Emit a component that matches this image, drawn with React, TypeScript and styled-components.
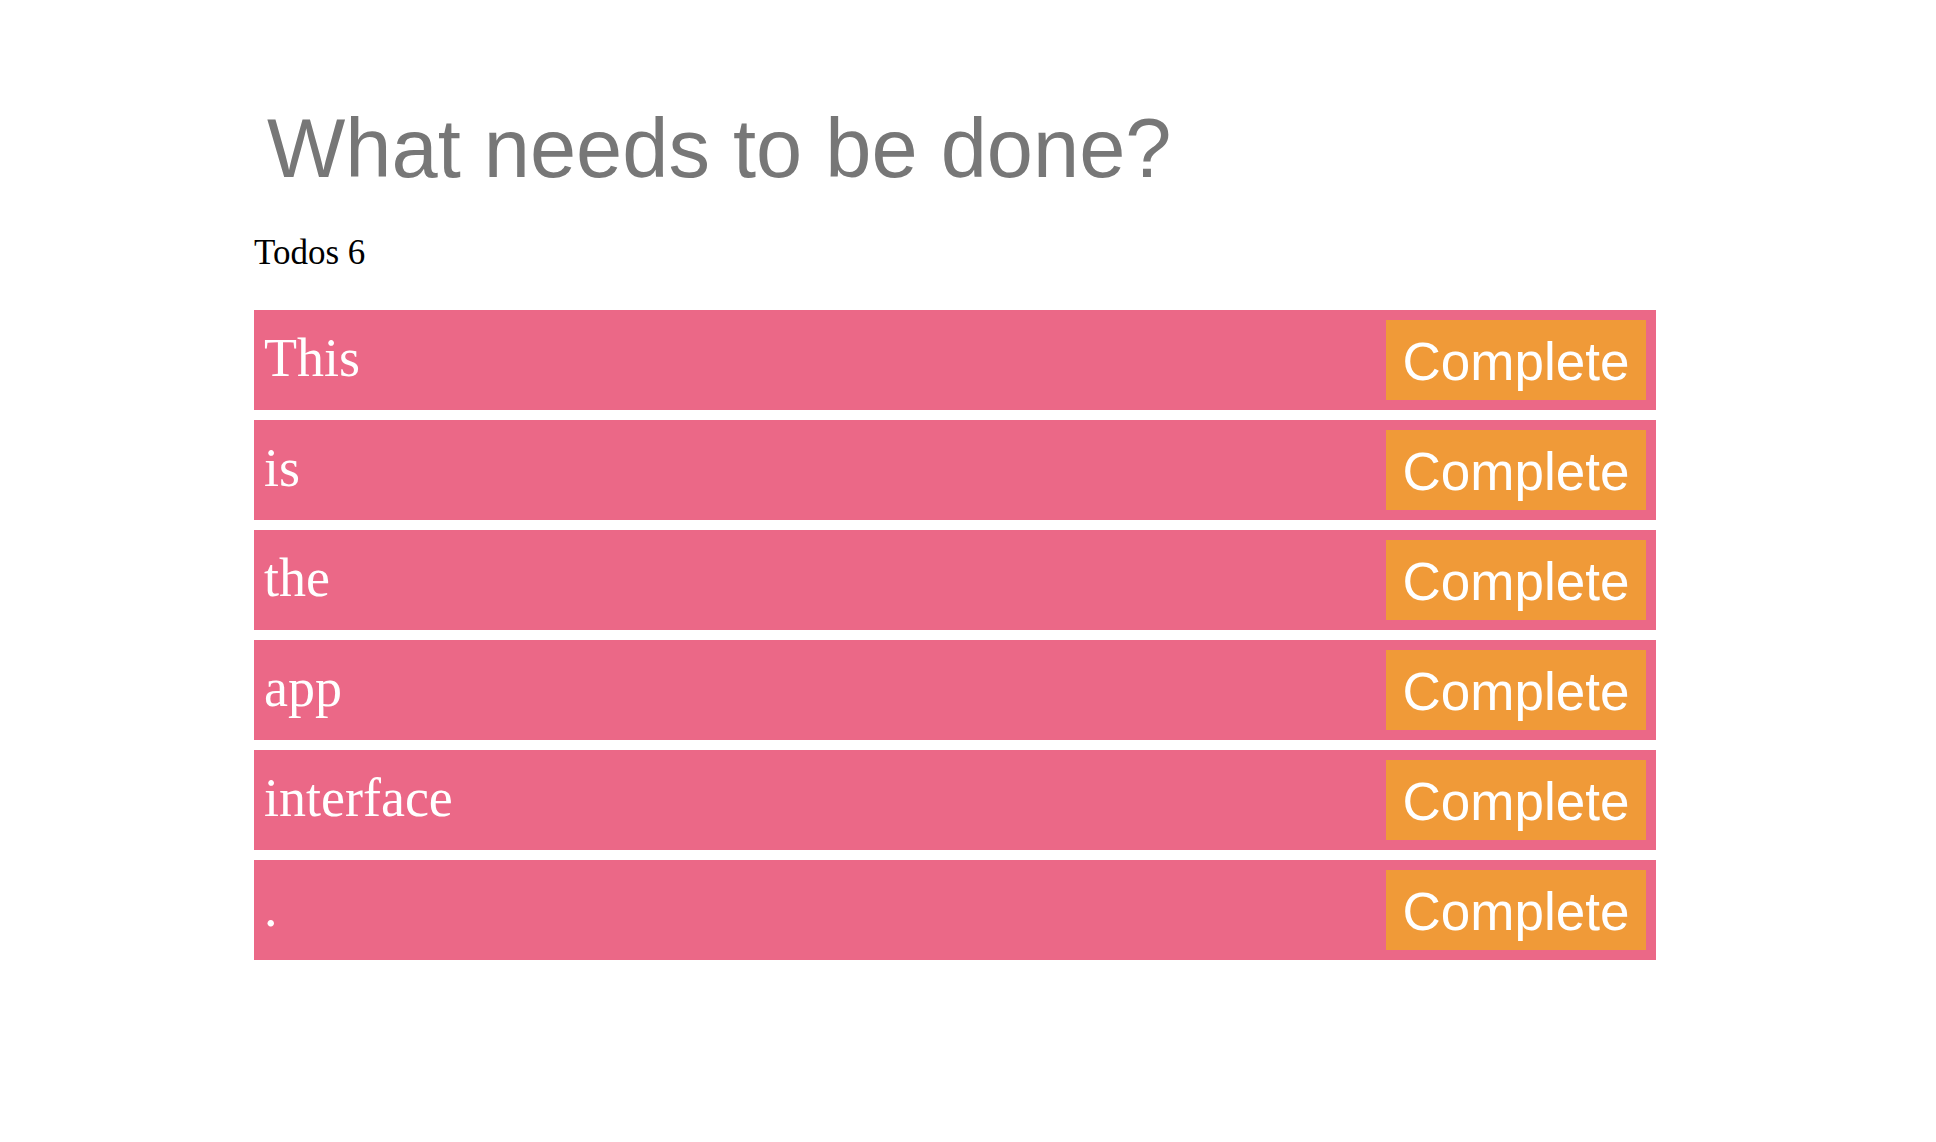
import React from "react";
import styled, { createGlobalStyle } from "styled-components";

const GlobalStyle = createGlobalStyle`
  html, body {
    margin: 0;
    padding: 0;
    background: #ffffff;
  }
  body {
    font-family: "Liberation Serif", "Times New Roman", serif;
  }
`;

const Page = styled.main`
  box-sizing: border-box;
  width: 100%;
  min-height: 1142px;
  padding: 107px 0 0 254px;
`;

const Container = styled.div`
  width: 1402px;
  display: flex;
  flex-direction: column;
`;

const Heading = styled.h1`
  margin: 0 0 45px 13px;
  font-family: "Liberation Sans", Arial, sans-serif;
  font-weight: 400;
  font-size: 83px;
  line-height: 83px;
  color: #777777;
`;

const Count = styled.div`
  font-family: "Liberation Serif", "Times New Roman", serif;
  font-size: 35px;
  line-height: 35px;
  color: #000000;
  margin-bottom: 40px;
`;

const List = styled.ul`
  list-style: none;
  margin: 0;
  padding: 0;
  display: flex;
  flex-direction: column;
  gap: 10px;
`;

const Row = styled.li`
  box-sizing: border-box;
  height: 100px;
  padding: 10px;
  background: #eb6887;
  display: flex;
  align-items: center;
  justify-content: space-between;
`;

const Label = styled.span`
  font-family: "Liberation Serif", "Times New Roman", serif;
  font-size: 54px;
  color: #ffffff;
  padding-bottom: 4px;
`;

const CompleteButton = styled.button`
  box-sizing: border-box;
  width: 260px;
  height: 80px;
  border: none;
  padding: 4px 0 0 0;
  background: #f09a38;
  color: #ffffff;
  font-family: "Liberation Sans", Arial, sans-serif;
  font-size: 53px;
  line-height: 76px;
  text-align: center;
  cursor: pointer;
`;

const todos = ["This", "is", "the", "app", "interface", "."];

export default function App() {
  return (
    <>
      <GlobalStyle />
      <Page>
        <Container>
          <Heading>What needs to be done?</Heading>
          <Count>Todos {todos.length}</Count>
          <List>
            {todos.map((t, i) => (
              <Row key={i}>
                <Label>{t}</Label>
                <CompleteButton>Complete</CompleteButton>
              </Row>
            ))}
          </List>
        </Container>
      </Page>
    </>
  );
}
